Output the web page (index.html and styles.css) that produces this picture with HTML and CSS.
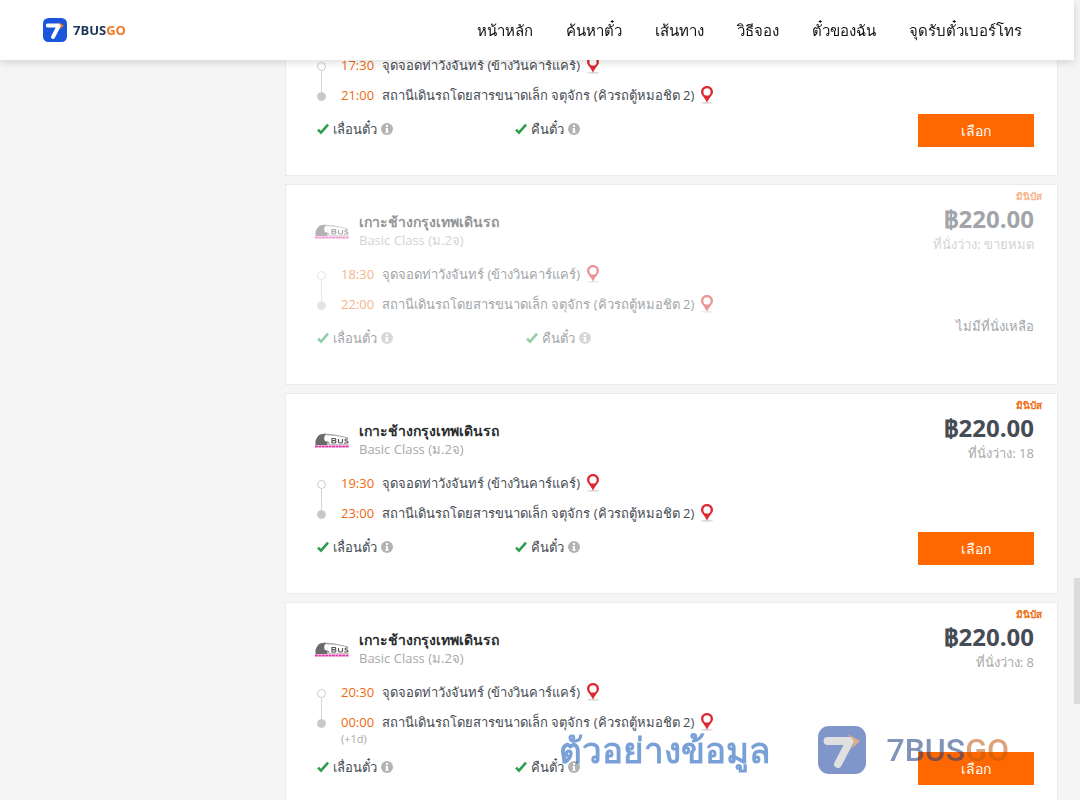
FILE: index.html
```
<!DOCTYPE html>
<html lang="th">
<head>
<meta charset="utf-8">
<meta name="viewport" content="width=device-width, initial-scale=1">
<title>7BUSGO</title>
<link rel="stylesheet" href="styles.css">
</head>
<body>
<svg class="defs" aria-hidden="true">
  <symbol id="logo" viewBox="0 0 48 48">
    <rect width="48" height="48" rx="11" fill="var(--tile)"/>
    <path d="M9.500 15H32L20 38" fill="none" stroke="var(--seven)" stroke-width="7.800" stroke-linecap="round" stroke-linejoin="round"/>
    <path d="M29 7.500L42 15L34 22.500L36 15Z" fill="var(--arrow)"/>
  </symbol>
  <symbol id="pin" viewBox="0 0 14 18">
    <ellipse cx="7" cy="16.800" rx="6" ry="1" fill="#ddd"/>
    <path fill-rule="evenodd" fill="#db2a31" d="M7 0C3.600 0 1 2.600 1 5.800C1 9.200 4.800 11.500 7 16.700C9.200 11.500 13 9.200 13 5.800C13 2.600 10.400 0 7 0ZM7 2.300A3.600 3.600 0 1 1 7 9.500A3.600 3.600 0 1 1 7 2.300Z"/>
  </symbol>
  <symbol id="check" viewBox="0 0 12 12">
    <path d="M1 6.600L4 9.600L11 1.600" fill="none" stroke="#2e9e4c" stroke-width="2.600"/>
  </symbol>
  <symbol id="info" viewBox="0 0 12 12">
    <circle cx="6" cy="6" r="6" fill="#b3b3b3"/>
    <path d="M5 2H7V4H5ZM4.500 5H7V8.500H7.700V9.700H4.300V8.500H5V6.200H4.500Z" fill="#fff"/>
  </symbol>
  <symbol id="bus" viewBox="0 0 34 16">
    <path d="M5 1.500Q14 -1 33 4.500V5.500Q20 2 13 2.500Z" fill="#aaa"/>
    <path d="M0.500 12V8Q2 3 5 1.500L11 0.500Q8 5 10 8L14 9V12Z" fill="#6a6a6a"/>
    <path d="M13 3L12 9L16 11H34V12H12" fill="#c4c4c4"/>
    <path d="M17 5.500V10H20Q22 8.800 20 7.700Q21.500 6 20 5.500ZM17 7.700H20M23.500 6V9Q23.500 10 25.500 10Q27.500 10 27.500 9V6M33 6H31Q29 7 31 8H32Q34 9.500 32 10H29" fill="none" stroke="#555" stroke-width="1.200"/>
    <path d="M0 13.500H34" stroke="#e23aa8" stroke-width="2.200" stroke-dasharray="3 .4"/>
  </symbol>
</svg>

<header class="header">
  <a class="brand" href="#"><svg class="brand-mark" aria-hidden="true"><use href="#logo"/></svg><span>7BUS<span class="go">GO</span></span></a>
  <nav class="nav">
    <a href="#">หน้าหลัก</a><a href="#">ค้นหาตั๋ว</a><a href="#">เส้นทาง</a><a href="#">วิธีจอง</a><a href="#">ตั๋วของฉัน</a><a href="#">จุดรับตั๋วเบอร์โทร</a>
  </nav>
</header>

<main class="results">
  <article class="card card-first">
    <div class="trip">
      <ul class="route">
        <li class="stop"><i class="dot"></i><time>17:30</time><span>จุดจอดท่าวังจันทร์ (ข้างวินคาร์แคร์)</span><svg class="pin" aria-hidden="true"><use href="#pin"/></svg></li>
        <li class="stop"><i class="dot"></i><time>21:00</time><span>สถานีเดินรถโดยสารขนาดเล็ก จตุจักร (คิวรถตู้หมอชิต 2)</span><svg class="pin" aria-hidden="true"><use href="#pin"/></svg></li>
      </ul>
      <div class="features">
        <span class="feature"><svg class="icon" aria-hidden="true"><use href="#check"/></svg>เลื่อนตั๋ว<svg class="icon info" aria-hidden="true"><use href="#info"/></svg></span>
        <span class="feature"><svg class="icon" aria-hidden="true"><use href="#check"/></svg>คืนตั๋ว<svg class="icon info" aria-hidden="true"><use href="#info"/></svg></span>
      </div>
    </div>
    <div class="fare"><button class="select" type="button">เลือก</button></div>
  </article>

  <article class="card soldout">
    <div class="trip">
      <div class="operator">
        <svg class="bus" aria-hidden="true"><use href="#bus"/></svg>
        <div><h2>เกาะช้างกรุงเทพเดินรถ</h2><p>Basic Class (ม.2จ)</p></div>
      </div>
      <ul class="route">
        <li class="stop"><i class="dot"></i><time>18:30</time><span>จุดจอดท่าวังจันทร์ (ข้างวินคาร์แคร์)</span><svg class="pin" aria-hidden="true"><use href="#pin"/></svg></li>
        <li class="stop"><i class="dot"></i><time>22:00</time><span>สถานีเดินรถโดยสารขนาดเล็ก จตุจักร (คิวรถตู้หมอชิต 2)</span><svg class="pin" aria-hidden="true"><use href="#pin"/></svg></li>
      </ul>
      <div class="features">
        <span class="feature"><svg class="icon" aria-hidden="true"><use href="#check"/></svg>เลื่อนตั๋ว<svg class="icon info" aria-hidden="true"><use href="#info"/></svg></span>
        <span class="feature"><svg class="icon" aria-hidden="true"><use href="#check"/></svg>คืนตั๋ว<svg class="icon info" aria-hidden="true"><use href="#info"/></svg></span>
      </div>
    </div>
    <div class="fare">
      <span class="kind">มินิบัส</span>
      <strong class="price">฿220.00</strong>
      <span class="seats">ที่นั่งว่าง: ขายหมด</span>
      <span class="none">ไม่มีที่นั่งเหลือ</span>
    </div>
  </article>

  <article class="card">
    <div class="trip">
      <div class="operator">
        <svg class="bus" aria-hidden="true"><use href="#bus"/></svg>
        <div><h2>เกาะช้างกรุงเทพเดินรถ</h2><p>Basic Class (ม.2จ)</p></div>
      </div>
      <ul class="route">
        <li class="stop"><i class="dot"></i><time>19:30</time><span>จุดจอดท่าวังจันทร์ (ข้างวินคาร์แคร์)</span><svg class="pin" aria-hidden="true"><use href="#pin"/></svg></li>
        <li class="stop"><i class="dot"></i><time>23:00</time><span>สถานีเดินรถโดยสารขนาดเล็ก จตุจักร (คิวรถตู้หมอชิต 2)</span><svg class="pin" aria-hidden="true"><use href="#pin"/></svg></li>
      </ul>
      <div class="features">
        <span class="feature"><svg class="icon" aria-hidden="true"><use href="#check"/></svg>เลื่อนตั๋ว<svg class="icon info" aria-hidden="true"><use href="#info"/></svg></span>
        <span class="feature"><svg class="icon" aria-hidden="true"><use href="#check"/></svg>คืนตั๋ว<svg class="icon info" aria-hidden="true"><use href="#info"/></svg></span>
      </div>
    </div>
    <div class="fare">
      <span class="kind">มินิบัส</span>
      <strong class="price">฿220.00</strong>
      <span class="seats">ที่นั่งว่าง: 18</span>
      <button class="select" type="button">เลือก</button>
    </div>
  </article>

  <article class="card">
    <div class="trip">
      <div class="operator">
        <svg class="bus" aria-hidden="true"><use href="#bus"/></svg>
        <div><h2>เกาะช้างกรุงเทพเดินรถ</h2><p>Basic Class (ม.2จ)</p></div>
      </div>
      <ul class="route">
        <li class="stop"><i class="dot"></i><time>20:30</time><span>จุดจอดท่าวังจันทร์ (ข้างวินคาร์แคร์)</span><svg class="pin" aria-hidden="true"><use href="#pin"/></svg></li>
        <li class="stop"><i class="dot"></i><time>00:00</time><span>สถานีเดินรถโดยสารขนาดเล็ก จตุจักร (คิวรถตู้หมอชิต 2)</span><svg class="pin" aria-hidden="true"><use href="#pin"/></svg></li>
      </ul>
      <div class="nextday">(+1d)</div>
      <div class="features">
        <span class="feature"><svg class="icon" aria-hidden="true"><use href="#check"/></svg>เลื่อนตั๋ว<svg class="icon info" aria-hidden="true"><use href="#info"/></svg></span>
        <span class="feature"><svg class="icon" aria-hidden="true"><use href="#check"/></svg>คืนตั๋ว<svg class="icon info" aria-hidden="true"><use href="#info"/></svg></span>
      </div>
    </div>
    <div class="fare">
      <span class="kind">มินิบัส</span>
      <strong class="price">฿220.00</strong>
      <span class="seats">ที่นั่งว่าง: 8</span>
      <button class="select" type="button">เลือก</button>
    </div>
  </article>
</main>

<div class="watermark">
  <span class="sample">ตัวอย่างข้อมูล</span>
  <svg class="watermark-mark" aria-hidden="true"><use href="#logo"/></svg>
  <span class="watermark-name">7BUS<span class="go">GO</span></span>
</div>
<div class="scrollbar"></div>
</body>
</html>
```
FILE: styles.css
```
* { box-sizing: border-box; }
body {
  --tile: #1a56db;
  --seven: #fff;
  --arrow: #f97316;
  margin: 0;
  height: 100vh;
  overflow: hidden;
  background: #f5f5f5;
  color: #464c54;
  font: 14px/20px "Open Sans", "Noto Sans", sans-serif;
}
h2, p, ul { margin: 0; padding: 0; }
ul { list-style: none; }
a { color: inherit; text-decoration: none; }
.defs { position: absolute; width: 0; height: 0; }

.header {
  position: fixed;
  inset: 0 6px auto 0;
  z-index: 2;
  height: 60px;
  padding: 0 52px 0 43px;
  display: flex;
  align-items: center;
  justify-content: space-between;
  background: #fff;
  box-shadow: 0 2px 8px rgba(0, 0, 0, .15);
}
.brand {
  display: flex;
  align-items: center;
  gap: 6px;
  font-size: 13px;
  font-weight: 700;
  color: #1e3456;
}
.brand-mark { width: 24px; height: 24px; }
.go { color: #f07a25; }
.nav { display: flex; gap: 33px; font-size: 15px; color: #111; }

.results {
  margin: 50px 22px 0 285px;
  display: flex;
  flex-direction: column;
  gap: 8px;
}
.card {
  flex: none;
  min-height: 201px;
  padding: 0 15px 36px 30px;
  display: flex;
  justify-content: space-between;
  background: #fff;
  border: 1px solid #ebebeb;
}
.card-first { min-height: 0; border-top: 0; }
.soldout > * { opacity: .5; }
.trip { flex: none; }
.operator {
  display: flex;
  align-items: center;
  gap: 10px;
  height: 37px;
  margin: 28px 0 9px;
}
.bus { width: 34px; height: 16px; margin-left: -1px; }
.operator h2 { font-size: 14px; line-height: 18px; color: #2b2d30; }
.operator p { font-size: 13px; line-height: 19px; color: #a8a8a8; }
.stop {
  display: flex;
  align-items: center;
  height: 30px;
  padding-left: 1px;
  font-size: 13px;
  line-height: 30px;
}
.stop time { width: 41px; margin-left: 15px; color: #ee6a11; }
.dot {
  position: relative;
  width: 9px;
  height: 9px;
  margin-top: 3px;
  border: 1px solid #ccc;
  border-radius: 50%;
}
.stop + .stop .dot { background: #c8c8c8; }
.stop + .stop .dot::before {
  content: "";
  position: absolute;
  left: 3px;
  bottom: 8px;
  width: 1px;
  height: 21px;
  background: #d4d4d4;
}
.pin { width: 14px; height: 18px; margin-left: 6px; }
.nextday {
  height: 11px;
  margin-left: 25px;
  font-size: 11px;
  line-height: 4px;
  color: #a8a8a8;
}
.features {
  display: grid;
  grid-template-columns: 198px 198px;
  height: 20px;
  margin-top: 9px;
}
.soldout .features { grid-template-columns: 209px 198px; }
.feature {
  display: flex;
  align-items: center;
  gap: 4px;
  padding-left: 1px;
  font-size: 13px;
}
.icon { width: 12px; height: 12px; }

.fare {
  display: flex;
  flex-direction: column;
  align-items: flex-end;
  padding: 4px 8px 0 0;
  margin-bottom: -8px;
}
.kind {
  margin-right: -8px;
  font-size: 10px;
  font-weight: 700;
  line-height: 14px;
  color: #f06a10;
}
.price { font-size: 24px; line-height: 32px; }
.seats { font-size: 13px; line-height: 18px; color: #a8a8a8; }
.none { margin: auto 0 20px; font-size: 13px; }
.select {
  width: 116px;
  height: 33px;
  margin-top: auto;
  padding: 0;
  border: 0;
  background: #ff6700;
  color: #fff;
  font: 14px/33px "Open Sans", "Noto Sans", sans-serif;
}

.watermark {
  --tile: #1e44a2;
  --seven: #c8c8c8;
  --arrow: #c46a30;
  position: fixed;
  right: 71px;
  bottom: 20px;
  z-index: 3;
  display: flex;
  align-items: center;
  height: 60px;
  opacity: .56;
}
.sample { font-size: 35px; font-weight: 700; line-height: 60px; color: #1158b8; }
.watermark-mark { width: 48px; height: 48px; margin: 0 20px 0 48px; }
.watermark-name { font: 500 32px/60px Roboto, sans-serif; color: #1e3f80; }
.watermark .go { color: #c05a10; }
.scrollbar {
  position: fixed;
  right: 0;
  top: 578px;
  z-index: 3;
  width: 6px;
  height: 126px;
  background: #dcdcdc;
}
```
